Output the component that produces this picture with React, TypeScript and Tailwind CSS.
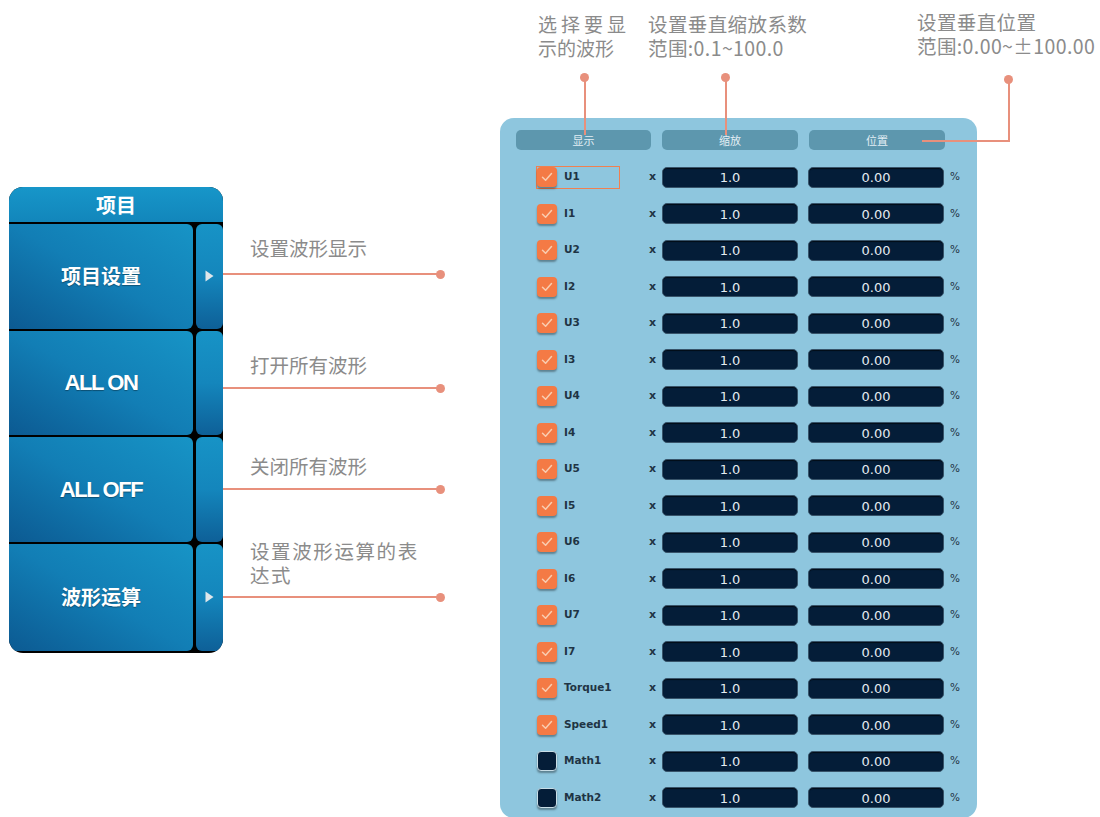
const CJK = "font-['Noto_Sans_CJK_SC',sans-serif]"

const CHANNELS = [
  'U1', 'I1', 'U2', 'I2', 'U3', 'I3', 'U4', 'I4', 'U5', 'I5', 'U6', 'I6', 'U7', 'I7', 'Torque1', 'Speed1', 'Math1', 'Math2',
]

const MENU = [
  { label: '项目设置', arrow: true, cjk: true },
  { label: 'ALL ON', arrow: false, cjk: false },
  { label: 'ALL OFF', arrow: false, cjk: false },
  { label: '波形运算', arrow: true, cjk: true },
]

// text top margin, line top margin (each row measured from the previous element)
const NOTES = [
  { text: '设置波形显示', textGap: 'mt-[12px]', lineGap: 'mt-[9.5px]' },
  { text: '打开所有波形', textGap: 'mt-[74.5px]', lineGap: 'mt-[6.5px]' },
  { text: '关闭所有波形', textGap: 'mt-[61.5px]', lineGap: 'mt-[6.5px]' },
  { text: '设置波形运算的表达式', textGap: 'mt-[45.5px]', lineGap: 'mt-[5.5px]' },
]

function Check() {
  return (
    <svg width="14" height="14" viewBox="0 0 14 14" fill="none">
      <path d="M2.5 7.2 L5.6 10.2 L11.5 3.6" stroke="#f9cdb0" strokeWidth="1.5" strokeLinecap="round" strokeLinejoin="round" />
    </svg>
  )
}

function Dot() {
  return <div className="h-[9px] w-[9px] rounded-full bg-[#e8907c]" />
}

function MenuPanel() {
  return (
    <div className="w-[214px] overflow-hidden rounded-[14px] bg-black pb-[2px]">
      <div className={`flex h-[35px] items-center justify-center bg-gradient-to-b from-[#1796c9] to-[#1286bb] text-[20px] font-bold text-white ${CJK}`}>
        项目
      </div>
      <div className="mt-[2px] flex flex-col gap-[2px]">
        {MENU.map((item, i) => (
          <div key={item.label} className={`flex gap-[3px] ${i === 3 ? 'h-[107px]' : 'h-[104.5px]'}`}>
            <div
              className={`flex w-[184px] items-center justify-center rounded-r-[6px] bg-gradient-to-tr from-[#0c5a92] via-[#127eb5] to-[#1794c6] text-white [text-shadow:0_1px_1px_rgba(0,0,0,0.35)] ${
                item.cjk ? `text-[20px] font-bold ${CJK}` : "text-[22px] font-bold tracking-[-1.4px] font-['Liberation_Sans',sans-serif]"
              }`}
            >
              {item.label}
            </div>
            <div className="flex w-[27px] items-center justify-center rounded-[6px] bg-gradient-to-b from-[#1793c6] via-[#1486bc] to-[#0e6098]">
              {item.arrow ? (
                <svg width="9" height="12" viewBox="0 0 9 12">
                  <path d="M0.5 0.5 L8.5 6 L0.5 11.5 Z" fill="#dfe6ea" />
                </svg>
              ) : null}
            </div>
          </div>
        ))}
      </div>
    </div>
  )
}

function Notes() {
  return (
    <div className={`mt-[224px] flex w-[222px] flex-col text-[19.5px] leading-[24px] text-[#8b8b8b] ${CJK}`}>
      {NOTES.map((note, i) => (
        <div key={i} className="flex flex-col">
          <div className={`${note.textGap} pl-[27px] ${i === 3 ? 'w-[200px] tracking-[1.6px]' : ''}`}>{note.text}</div>
          <div className={`flex h-[9px] items-center ${note.lineGap}`}>
            <div className="h-[2px] flex-1 bg-[#e8907c]" />
            <div className="-ml-[4px]">
              <Dot />
            </div>
          </div>
        </div>
      ))}
    </div>
  )
}

function Field({ value }: { value: string }) {
  return (
    <div className="flex h-[21px] w-[136px] items-center justify-center rounded-[5px] border border-[#38546a] bg-[#041d38] pt-[1px] font-['DejaVu_Sans',sans-serif] text-[13px] text-[#e4ebf1] shadow-[inset_0_1px_1px_rgba(0,0,0,0.6)]">
      {value}
    </div>
  )
}

function WavePanel() {
  return (
    <div className="relative mt-[118px] h-[700px] w-[477px] rounded-[14px] bg-[#8ec6de] px-[16px] pt-[12px]">
      <div className={`flex gap-[11px] text-[11px] text-[#e2eef4] ${CJK}`}>
        <div className="flex h-[20px] w-[135px] items-center justify-center rounded-[5px] bg-[#5d97ae]">显示</div>
        <div className="flex h-[20px] w-[136px] items-center justify-center rounded-[5px] bg-[#5d97ae]">缩放</div>
        <div className="flex h-[20px] w-[136px] items-center justify-center rounded-[5px] bg-[#5d97ae]">位置</div>
      </div>
      <div className="mt-[9px] flex flex-col">
        {CHANNELS.map((name, i) => {
          const on = !name.startsWith('Math')
          return (
            <div key={name} className="flex h-[36.5px] items-center">
              <div
                className={`ml-[20px] flex h-[23px] w-[84px] items-center gap-[7px] ${
                  i === 0 ? 'border border-[#f08050]' : 'border border-transparent'
                }`}
              >
                <div
                  className={`flex h-[20px] w-[20px] items-center justify-center rounded-[4px] shadow-[0_2px_2px_rgba(0,0,0,0.35)] ${
                    on ? 'bg-[#f47a45]' : 'border border-[#c8dde6] bg-[#041d38]'
                  }`}
                >
                  {on ? <Check /> : null}
                </div>
                <span className="font-['DejaVu_Sans',sans-serif] text-[10.5px] font-bold text-[#1f3444]">{name}</span>
              </div>
              <span className="ml-[29px] w-[13px] font-['DejaVu_Sans',sans-serif] text-[11px] font-bold text-[#1f3444]">x</span>
              <Field value="1.0" />
              <div className="ml-[10px]">
                <Field value="0.00" />
              </div>
              <span className="ml-[6px] font-['DejaVu_Sans',sans-serif] text-[10.5px] text-[#1f3444]">%</span>
            </div>
          )
        })}
      </div>
    </div>
  )
}

export default function App() {
  return (
    <div className="relative h-[817px] w-[1100px] overflow-hidden bg-white">
      <div className="flex items-start">
        <div className="ml-[9px] mt-[187px]">
          <MenuPanel />
        </div>
        <Notes />
        <div className="ml-[55px]">
          <WavePanel />
        </div>
      </div>

      {/* top callouts */}
      <div className={`absolute left-[538px] top-[12px] w-[88px] text-justify text-[19px] leading-[24px] text-[#8b8b8b] ${CJK}`}>
        选择要显示的波形
      </div>
      <div className={`absolute left-[648px] top-[12px] text-[19.5px] leading-[24px] tracking-[0.4px] text-[#8b8b8b] ${CJK}`}>
        设置垂直缩放系数
        <br />
        范围:0.1~100.0
      </div>
      <div className={`absolute left-[917px] top-[10px] text-[19.5px] leading-[24px] tracking-[0.4px] text-[#8b8b8b] ${CJK}`}>
        设置垂直位置
        <br />
        范围:0.00~±100.00
      </div>

      <div className="absolute left-[580px] top-[73px] flex flex-col items-center">
        <Dot />
        <div className="-mt-[2px] h-[55px] w-[2px] bg-[#e8907c]" />
      </div>
      <div className="absolute left-[721px] top-[73px] flex flex-col items-center">
        <Dot />
        <div className="-mt-[2px] h-[55px] w-[2px] bg-[#e8907c]" />
      </div>
      <div className="absolute left-[1004px] top-[75px] flex flex-col items-center">
        <Dot />
        <div className="-mt-[2px] h-[60px] w-[2px] bg-[#e8907c]" />
      </div>
      <div className="absolute left-[922px] top-[140px] h-[2px] w-[87px] bg-[#e8907c]" />
    </div>
  )
}
